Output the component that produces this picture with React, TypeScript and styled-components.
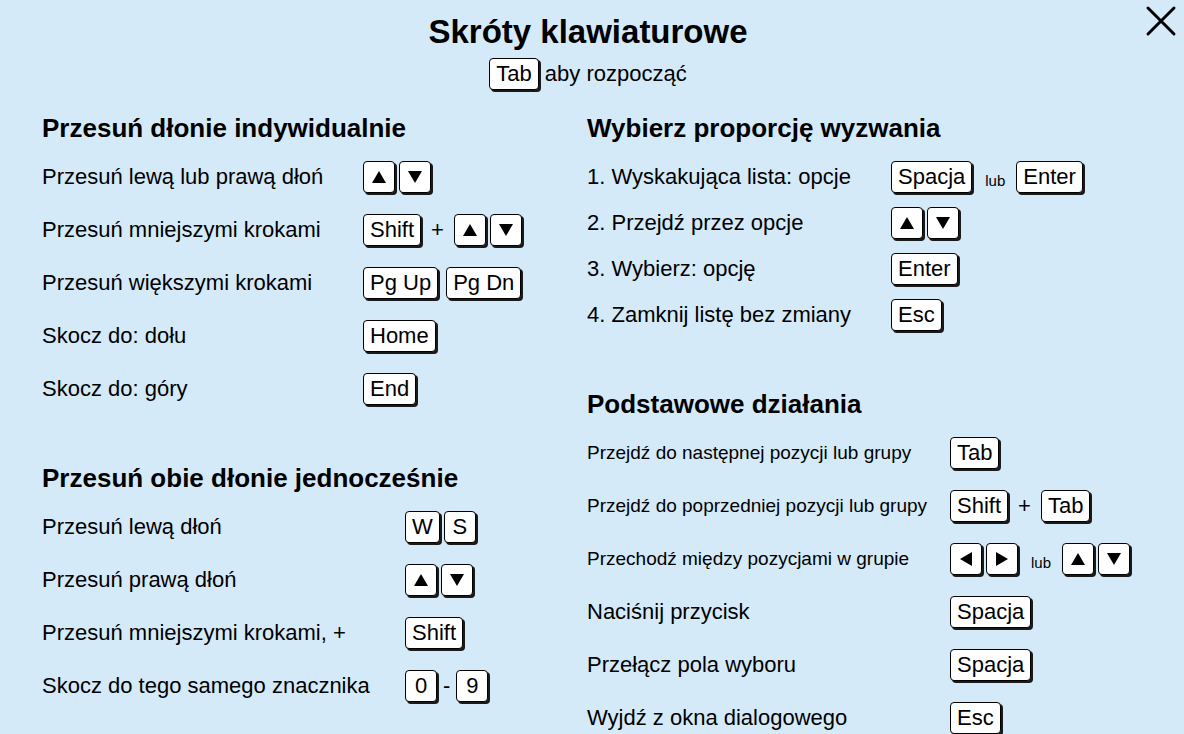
import styled, { createGlobalStyle } from "styled-components";

const GlobalStyle = createGlobalStyle`
  html, body {
    margin: 0;
    padding: 0;
    background: #d5eaf8;
  }
  body {
    font-family: "Liberation Sans", Arial, sans-serif;
    color: #000;
  }
`;

const Page = styled.div`
 position: relative;
 width: 1184px;
 height: 734px;
 overflow: hidden;
 background: #d5eaf8;
 padding-top: 12px;
 box-sizing: border-box;
`;

const CloseButton = styled.button`
 position: absolute;
 top: 4px;
 right: 6px;
 width: 34px;
 height: 34px;
 padding: 0;
 border: none;
 background: transparent;
 display: flex;
 align-items: center;
 justify-content: center;
 cursor: pointer;
`;

const Header = styled.header`
 display: flex;
 flex-direction: column;
 align-items: center;
 padding-right: 8px;
`;

const Title = styled.h1`
 margin: 0;
 font-size: 33px;
 line-height: 40px;
 font-weight: bold;
`;

const Subtitle = styled.div`
 display: flex;
 align-items: center;
 gap: 6px;
 margin-top: 6px;
 font-size: 22px;
`;

const Columns = styled.div`
 display: grid;
 grid-template-columns: 545px 1fr;
 padding-left: 42px;
 margin-top: 23px;
`;

const Column = styled.div`
 display: flex;
 flex-direction: column;
 gap: 58px;
`;

const SectionBox = styled.section`
 display: flex;
 flex-direction: column;
`;

const Heading = styled.h2`
 margin: 0 0 18px;
 font-size: 26px;
 line-height: 30px;
 font-weight: bold;
 white-space: nowrap;
`;

const Rows = styled.div<{ $gap: number }>`
 display: flex;
 flex-direction: column;
 gap: ${(p) => p.$gap}px;
`;

const Row = styled.div`
 display: flex;
 align-items: center;
 height: 32px;
`;

const Label = styled.span<{ $width: number; $small?: boolean }>`
 width: ${(p) => p.$width}px;
 flex-shrink: 0;
 font-size: ${(p) => (p.$small ? 19 : 22)}px;
 white-space: nowrap;
`;

const Keys = styled.div`
 display: flex;
 align-items: center;
 gap: 8px;
`;

const Pair = styled.span`
 display: flex;
 gap: 4px;
`;

const Key = styled.kbd`
 display: inline-flex;
 align-items: center;
 justify-content: center;
 box-sizing: border-box;
 height: 32px;
 min-width: 32px;
 padding: 0 6px;
 border: 1.5px solid #000;
 border-radius: 4px;
 background: #fff;
 box-shadow: 2px 2px 0 #1a1a1a;
 font-family: "Liberation Sans", Arial, sans-serif;
 font-size: 22px;
 color: #000;
`;

const Join = styled.span`
 font-size: 22px;
 margin: 0 2px;
`;

const Or = styled.span`
 font-size: 15px;
 margin: 7px 3px 0 5px;
`;

const Dash = styled.span`
 font-size: 22px;
 margin: 0 -2px;
`;

type Shortcut = {
    label: string;
    keys: React.ReactNode;
    small?: boolean;
};

const Arrow: React.FC<{ dir: "up" | "down" | "left" | "right" }> = ({ dir }) => {
    const points = {
        up: "7,1 14,13 0,13",
        down: "0,1 14,1 7,13",
        left: "1,7 13,0 13,14",
        right: "1,0 13,7 1,14",
    }[dir];
    return (
        <svg width="14" height="14" viewBox="0 0 14 14">
            <polygon points={points} fill="#000" />
        </svg>
    );
};

const UpDown = () => (
    <Pair>
        <Key><Arrow dir="up" /></Key>
        <Key><Arrow dir="down" /></Key>
    </Pair>
);

const leftFirst: Shortcut[] = [
    { label: "Przesuń lewą lub prawą dłoń", keys: <UpDown /> },
    { label: "Przesuń mniejszymi krokami", keys: <><Key>Shift</Key><Join>+</Join><UpDown /></> },
    { label: "Przesuń większymi krokami", keys: <><Key>Pg Up</Key><Key>Pg Dn</Key></> },
    { label: "Skocz do: dołu", keys: <Key>Home</Key> },
    { label: "Skocz do: góry", keys: <Key>End</Key> },
];

const leftSecond: Shortcut[] = [
    { label: "Przesuń lewą dłoń", keys: <Pair><Key>W</Key><Key>S</Key></Pair> },
    { label: "Przesuń prawą dłoń", keys: <UpDown /> },
    { label: "Przesuń mniejszymi krokami, +", keys: <Key>Shift</Key> },
    { label: "Skocz do tego samego znacznika", keys: <><Key>0</Key><Dash>-</Dash><Key>9</Key></> },
];

const rightFirst: Shortcut[] = [
    { label: "1. Wyskakująca lista: opcje", keys: <><Key>Spacja</Key><Or>lub</Or><Key>Enter</Key></> },
    { label: "2. Przejdź przez opcje", keys: <UpDown /> },
    { label: "3. Wybierz: opcję", keys: <Key>Enter</Key> },
    { label: "4. Zamknij listę bez zmiany", keys: <Key>Esc</Key> },
];

const rightSecond: Shortcut[] = [
    { label: "Przejdź do następnej pozycji lub grupy", keys: <Key>Tab</Key>, small: true },
    { label: "Przejdź do poprzedniej pozycji lub grupy", keys: <><Key>Shift</Key><Join>+</Join><Key>Tab</Key></>, small: true },
    {
        label: "Przechodź między pozycjami w grupie",
        keys: (
            <>
                <Pair>
                    <Key><Arrow dir="left" /></Key>
                    <Key><Arrow dir="right" /></Key>
                </Pair>
                <Or>lub</Or>
                <UpDown />
            </>
        ),
        small: true,
    },
    { label: "Naciśnij przycisk", keys: <Key>Spacja</Key> },
    { label: "Przełącz pola wyboru", keys: <Key>Spacja</Key> },
    { label: "Wyjdź z okna dialogowego", keys: <Key>Esc</Key> },
];

const Section: React.FC<{ title: string; items: Shortcut[]; labelWidth: number; gap: number }> = ({
    title,
    items,
    labelWidth,
    gap,
}) => (
    <SectionBox>
        <Heading>{title}</Heading>
        <Rows $gap={gap}>
            {items.map((item) => (
                <Row key={item.label}>
                    <Label $width={labelWidth} $small={item.small}>{item.label}</Label>
                    <Keys>{item.keys}</Keys>
                </Row>
            ))}
        </Rows>
    </SectionBox>
);

export default function App() {
    return (
        <>
            <GlobalStyle />
            <Page>
                <CloseButton aria-label="Zamknij">
                    <svg width="32" height="32" viewBox="0 0 32 32">
                        <path d="M3 3 L29 29 M29 3 L3 29" stroke="#000" strokeWidth="3" strokeLinecap="round" />
                    </svg>
                </CloseButton>
                <Header>
                    <Title>Skróty klawiaturowe</Title>
                    <Subtitle>
                        <Key>Tab</Key>
                        <span>aby rozpocząć</span>
                    </Subtitle>
                </Header>
                <Columns>
                    <Column>
                        <Section title="Przesuń dłonie indywidualnie" items={leftFirst} labelWidth={321} gap={21} />
                        <Section title="Przesuń obie dłonie jednocześnie" items={leftSecond} labelWidth={363} gap={21} />
                    </Column>
                    <Column>
                        <Section title="Wybierz proporcję wyzwania" items={rightFirst} labelWidth={304} gap={14} />
                        <Section title="Podstawowe działania" items={rightSecond} labelWidth={363} gap={21} />
                    </Column>
                </Columns>
            </Page>
        </>
    );
}
